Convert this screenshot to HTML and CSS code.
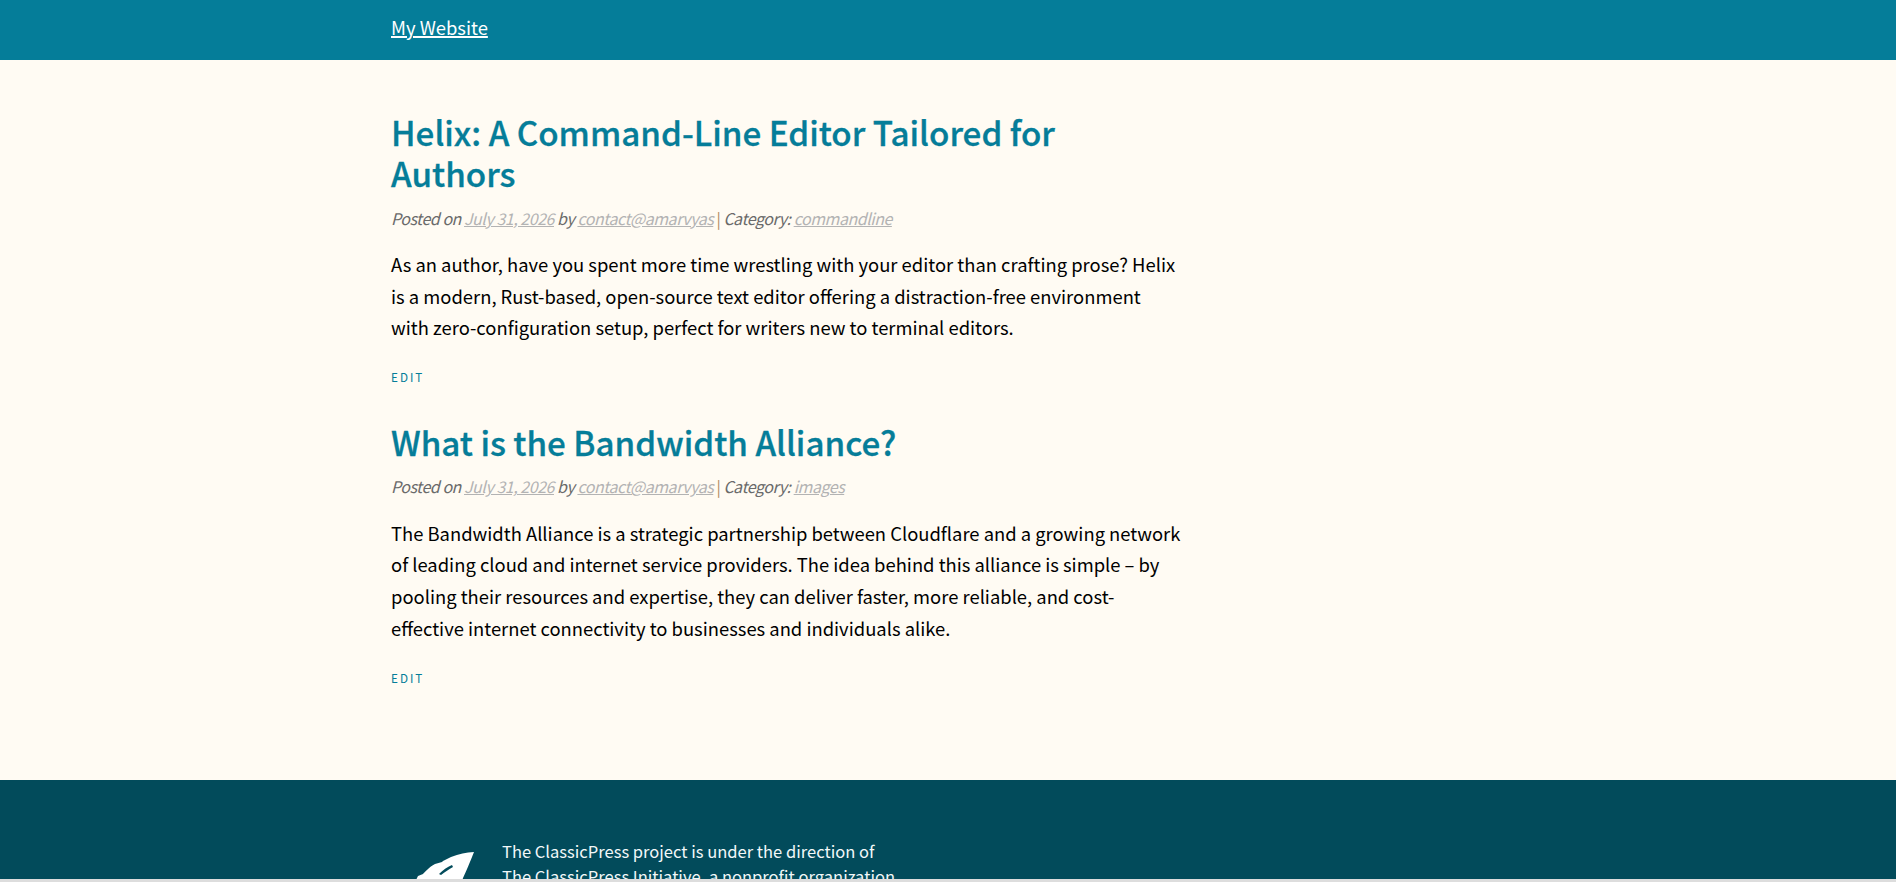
FILE: index.html
```html
<!DOCTYPE html>
<html lang="en">
<head>
<meta charset="utf-8">
<title>My Website</title>
<link rel="stylesheet" href="styles.css">
</head>
<body>
<div class="page">
  <header class="site-header">
    <div class="wrap"><a class="site-title" href="#">My Website</a></div>
  </header>
  <main class="wrap content">
    <article class="post">
      <h2 class="post-title">Helix: A Command-Line Editor Tailored for Authors</h2>
      <p class="meta">Posted on <a href="#">July 31, 2026</a> by <a href="#">contact@amarvyas</a> <span class="sep">|</span> Category: <a href="#">commandline</a></p>
      <p class="excerpt">As an author, have you spent more time wrestling with your editor than crafting prose? Helix is a modern, Rust-based, open-source text editor offering a distraction-free environment with zero-configuration setup, perfect for writers new to terminal editors.</p>
      <a class="edit" href="#">Edit</a>
    </article>
    <article class="post">
      <h2 class="post-title">What is the Bandwidth Alliance?</h2>
      <p class="meta">Posted on <a href="#">July 31, 2026</a> by <a href="#">contact@amarvyas</a> <span class="sep">|</span> Category: <a href="#">images</a></p>
      <p class="excerpt">The Bandwidth Alliance is a strategic partnership between Cloudflare and a growing network of leading cloud and internet service providers. The idea behind this alliance is simple – by pooling their resources and expertise, they can deliver faster, more reliable, and cost-effective internet connectivity to businesses and individuals alike.</p>
      <a class="edit" href="#">Edit</a>
    </article>
  </main>
  <footer class="site-footer">
    <div class="wrap footer-inner">
      <svg class="logo" viewBox="0 0 90 60" aria-hidden="true">
        <path class="logo-shape" fill-rule="evenodd" d="M83 0 C75 .5 68 2 60 5 L52 9 L51 10 L44 12 C38 15 34 20 32 22 L27 24 L26 26 L20 40 L20 60 L62 60 L72 26 C75 20 79 10 83 0 Z M61 13 C56 15 52 18 48 22 L50 23 C54 20 58 17 62 15 Z"/>
      </svg>
      <p class="footer-text">The ClassicPress project is under the direction of<br>The ClassicPress Initiative, a nonprofit organization</p>
    </div>
  </footer>
  <div class="bottom-bar"></div>
</div>
</body>
</html>
```

FILE: styles.css
```css
html, body { margin: 0; padding: 0; }
body {
  background: #fffbf3;
  color: #000;
  font-family: "Noto Sans CJK SC", "Liberation Sans", sans-serif;
  font-size: 18.4px;
}
.page { position: relative; height: 882px; overflow: hidden; }
.wrap { width: 1114px; margin: 0 auto; }
.site-header { background: #057d99; height: 60px; }
.site-title { display: inline-block; color: #fff; font-size: 18.4px; line-height: 55px; text-decoration-thickness: 2px; }
.content { padding-top: 51px; height: 720px; box-sizing: border-box; }
.post { width: 790px; margin-bottom: 35.5px; }
.post-title { margin: 0; font-size: 33.2px; line-height: 41px; font-weight: 500; color: #057d99; -webkit-text-stroke: .3px #057d99; }
.meta { margin: 12.6px 0 0; font-size: 16px; line-height: 24px; letter-spacing: -.47px; font-style: italic; color: #6a6a6a; }
.meta a { color: #b3b3b3; }
.sep { color: #b08a60; font-style: normal; }
.excerpt { margin: 19.2px 0 0; line-height: 31.8px; }
.edit { display: block; margin-top: 25.2px; font-size: 11.7px; line-height: 16px; letter-spacing: 2px; text-transform: uppercase; color: #057d99; text-decoration: none; }
.site-footer { background: #024b5b; height: 102px; overflow: hidden; }
.footer-inner { display: flex; padding-top: 59px; }
.logo { width: 90px; height: 60px; margin: 13px 21px 0 0; flex: none; }
.logo-shape { fill: #fff; }
.footer-text { margin: 0; color: #f2f8f9; font-size: 16.55px; line-height: 25px; }
.bottom-bar { position: absolute; left: 0; right: 0; bottom: 0; height: 3px; background: #ddd; }
```
